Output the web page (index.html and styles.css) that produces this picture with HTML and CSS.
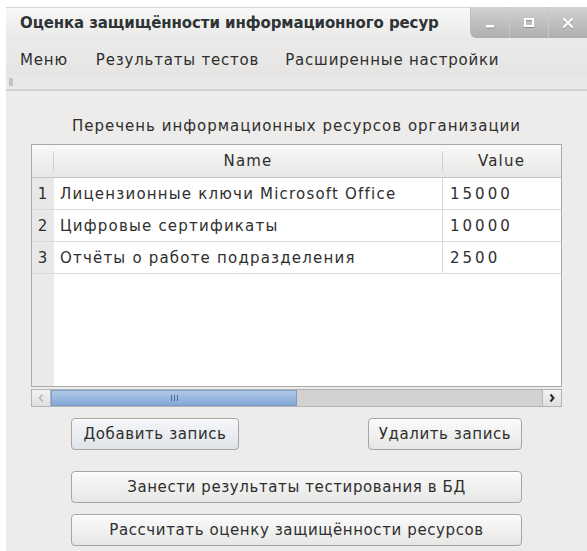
FILE: index.html
```html
<!DOCTYPE html>
<html lang="ru">
<head>
<meta charset="utf-8">
<title>Оценка защищённости информационного ресурса</title>
<link rel="stylesheet" href="styles.css">
</head>
<body>
<div class="window">
  <header class="titlebar">
    <span class="title">Оценка защищённости информационного ресур</span>
    <div class="controls">
      <span class="ctl ctl-min"><svg width="12" height="12" viewBox="0 0 12 12"><rect x="2" y="8" width="8" height="2.5" fill="#fff"/></svg></span>
      <span class="ctl"><svg width="12" height="12" viewBox="0 0 12 12"><rect x="2" y="2" width="8" height="7" fill="none" stroke="#fff" stroke-width="2"/></svg></span>
      <span class="ctl"><svg width="12" height="12" viewBox="0 0 12 12"><path d="M2 2 L10 10 M10 2 L2 10" stroke="#fff" stroke-width="2.2" stroke-linecap="round"/></svg></span>
    </div>
  </header>

  <nav class="menubar">
    <span class="menu-item">Меню</span>
    <span class="menu-item">Результаты тестов</span>
    <span class="menu-item">Расширенные настройки</span>
  </nav>

  <div class="toolbar"><span class="grip"></span></div>

  <main class="content">
    <p class="caption">Перечень информационных ресурсов организации</p>

    <div class="table">
      <div class="row head">
        <div class="rnum"><span class="hsep"></span></div>
        <div class="cell name">Name</div>
        <div class="cell value"><span class="hsep left"></span>Value</div>
      </div>
      <div class="row">
        <div class="rnum">1</div>
        <div class="cell name">Лицензионные ключи Microsoft Office</div>
        <div class="cell value">15000</div>
      </div>
      <div class="row">
        <div class="rnum">2</div>
        <div class="cell name">Цифровые сертификаты</div>
        <div class="cell value">10000</div>
      </div>
      <div class="row">
        <div class="rnum">3</div>
        <div class="cell name">Отчёты о работе подразделения</div>
        <div class="cell value">2500</div>
      </div>
      <div class="filler"><div class="rnum"></div><div class="blank"></div></div>
    </div>

    <div class="hscroll">
      <span class="arrow arrow-left"><svg width="8" height="10" viewBox="0 0 8 10"><path d="M5.5 1.5 L2.5 5 L5.5 8.5" fill="none" stroke="#b4b4b4" stroke-width="1.4"/></svg></span>
      <div class="trough">
        <div class="thumb"><span class="thumb-grip"></span></div>
      </div>
      <span class="arrow arrow-right"><svg width="8" height="10" viewBox="0 0 8 10"><path d="M2.5 1.5 L5.5 5 L2.5 8.5" fill="none" stroke="#2a2a2a" stroke-width="2"/></svg></span>
    </div>

    <div class="btn-row">
      <button class="btn btn-focus">Добавить запись</button>
      <button class="btn">Удалить запись</button>
    </div>
    <button class="btn wide first">Занести результаты тестирования в БД</button>
    <button class="btn wide">Рассчитать оценку защищённости ресурсов</button>
  </main>
</div>
</body>
</html>
```

FILE: styles.css
```css
html, body {
  margin: 0;
  padding: 0;
  background: #ffffff;
}

body {
  font-family: "DejaVu Sans", "Liberation Sans", sans-serif;
  font-size: 15px;
  color: #2e2e2e;
  letter-spacing: 0.8px;
}

.window {
  margin: 7px 0 0 6px;
  height: 544px;
  background: #edeceb;
  display: flex;
  flex-direction: column;
  overflow: hidden;
}

/* ---------- title bar ---------- */
.titlebar {
  height: 33px;
  display: flex;
  align-items: stretch;
  background: linear-gradient(#f7f7f6, #eae9e8);
  border-top: 1px solid #d6d6d6;
  box-sizing: border-box;
}

.title {
  flex: 1;
  padding: 6px 0 0 14px;
  font-weight: bold;
  font-size: 15px;
  letter-spacing: -0.1px;
  color: #2e3436;
  white-space: nowrap;
}

.controls {
  display: flex;
  height: 31px;
  margin-top: -1px;
}

.ctl {
  width: 38px;
  display: flex;
  align-items: center;
  justify-content: center;
  background: linear-gradient(#d2d2d2, #aeaeae);
  border-left: 1px solid #c8c8c8;
}

.ctl-min {
  border-bottom-left-radius: 6px;
  border-left: 1px solid #bdbdbd;
}

.ctl svg {
  filter: drop-shadow(0 1px 0 rgba(0, 0, 0, 0.25));
}

/* ---------- menu bar ---------- */
.menubar {
  height: 35px;
  display: flex;
  align-items: center;
  padding: 4px 0 0 14px;
  box-sizing: border-box;
  background: linear-gradient(#ebebea, #e6e5e4);
}

.menu-item {
  white-space: nowrap;
}

.menu-item:nth-child(1) {
  margin-right: 28px;
}

.menu-item:nth-child(2) {
  margin-right: 26px;
}

/* ---------- toolbar strip ---------- */
.toolbar {
  height: 14px;
  border-bottom: 2px solid #d4d3d2;
  background: #e9e8e7;
  display: flex;
  align-items: center;
  padding-left: 3px;
}

.grip {
  width: 4px;
  height: 8px;
  background: radial-gradient(circle, #c2c2c2 0.8px, transparent 1px) 0 0 / 2px 2px;
}

/* ---------- content ---------- */
.content {
  flex: 1;
  padding: 0 25px;
  display: flex;
  flex-direction: column;
}

.caption {
  margin: 26px 0 0;
  height: 27px;
  text-align: center;
  letter-spacing: 1px;
}

.table {
  height: 243px;
  border: 1px solid #a9a9a9;
  background: #ffffff;
  display: flex;
  flex-direction: column;
  box-sizing: border-box;
}

.row {
  display: grid;
  grid-template-columns: 22px 388px 1fr;
  height: 32px;
  border-bottom: 1px solid #d9d9d9;
  box-sizing: border-box;
}

.row.head {
  height: 33px;
  background: linear-gradient(#f9f9f8, #e8e7e6);
  border-bottom: 1px solid #c4c4c4;
}

.rnum {
  background: #e9e8e7;
  display: flex;
  align-items: center;
  justify-content: center;
  position: relative;
}

.row.head .rnum {
  background: transparent;
}

.cell {
  display: flex;
  align-items: center;
  padding-left: 6px;
  white-space: nowrap;
  position: relative;
  letter-spacing: 1.2px;
}

.row .value {
  border-left: 1px solid #d9d9d9;
  letter-spacing: 3px;
  padding-left: 7px;
}

.row.head .cell {
  justify-content: center;
  padding-left: 0;
  letter-spacing: 1.2px;
}

.row.head .value {
  border-left: none;
}

.hsep {
  position: absolute;
  right: 0;
  top: 6px;
  bottom: 6px;
  width: 1px;
  background: #d0d0d0;
}

.hsep.left {
  left: 0;
  right: auto;
}

.filler {
  flex: 1;
  display: grid;
  grid-template-columns: 22px 1fr;
}

.filler .rnum {
  background: #ebeae9;
}

/* ---------- horizontal scrollbar ---------- */
.hscroll {
  margin-top: 2px;
  height: 18px;
  display: flex;
  border: 1px solid #b3b3b3;
  box-sizing: border-box;
  background: #d3d2d1;
}

.arrow {
  width: 18px;
  display: flex;
  align-items: center;
  justify-content: center;
  background: linear-gradient(#f3f3f3, #dfdfdf);
}

.arrow-left {
  border-right: 1px solid #b8b8b8;
}

.arrow-right {
  border-left: 1px solid #b8b8b8;
}

.trough {
  flex: 1;
  display: flex;
}

.thumb {
  width: 246px;
  background: linear-gradient(#b0c9e8, #85a8d8);
  border: 1px solid #7c9cc8;
  box-sizing: border-box;
  display: flex;
  align-items: center;
  justify-content: center;
}

.thumb-grip {
  width: 7px;
  height: 6px;
  background: repeating-linear-gradient(90deg, #4c6a98 0 1px, transparent 1px 3px);
}

/* ---------- buttons ---------- */
.btn {
  font-family: inherit;
  font-size: 15px;
  letter-spacing: 0.6px;
  color: #2e2e2e;
  height: 32px;
  border: 1px solid #a5a5a5;
  border-radius: 4px;
  background: linear-gradient(#fbfbfb, #e6e6e5);
  box-shadow: inset 0 1px 0 #ffffff;
  padding: 0 4px;
  white-space: nowrap;
  cursor: default;
}

.btn-focus {
  background: linear-gradient(#f5f7fa, #e0e3e8);
}

.btn-row {
  margin: 11px 40px 0;
  display: flex;
  justify-content: space-between;
}

.btn-row .btn:first-child {
  width: 168px;
}

.btn-row .btn:last-child {
  width: 154px;
}

.wide {
  margin: 11px 40px 0;
}

.wide.first {
  margin-top: 21px;
}
```
